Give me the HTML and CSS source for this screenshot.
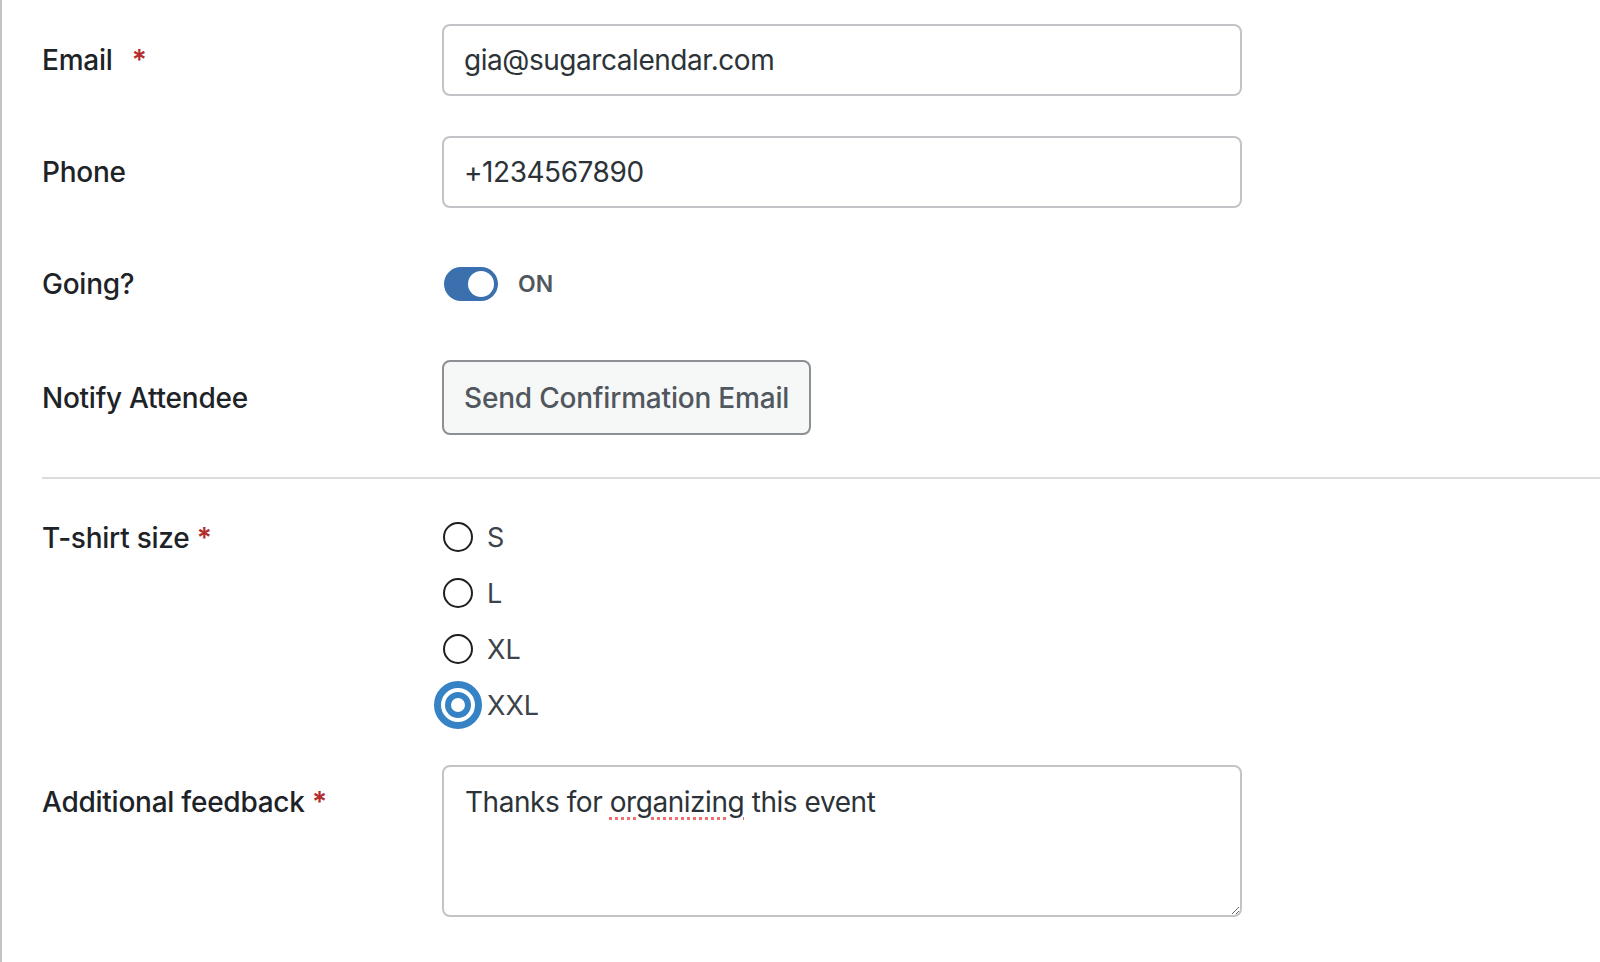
FILE: index.html
```html
<!DOCTYPE html>
<html lang="en">
<head>
<meta charset="utf-8">
<title>Attendee</title>
<link rel="stylesheet" href="styles.css">
</head>
<body>
<div class="page">
  <form class="form">
    <div class="row">
      <div class="label">Email <span class="req req-wide">*</span></div>
      <div class="field"><div class="input">gia@sugarcalendar.com</div></div>
    </div>
    <div class="row">
      <div class="label">Phone</div>
      <div class="field"><div class="input">+1234567890</div></div>
    </div>
    <div class="row">
      <div class="label">Going?</div>
      <div class="field toggle-field">
        <span class="toggle"><span class="knob"></span></span>
        <span class="toggle-text">ON</span>
      </div>
    </div>
    <div class="row row-button">
      <div class="label">Notify Attendee</div>
      <div class="field"><button type="button" class="button">Send Confirmation Email</button></div>
    </div>
    <div class="separator"></div>
    <div class="row row-top row-radios">
      <div class="label label-radios">T-shirt size <span class="req">*</span></div>
      <div class="field radios">
        <div class="radio-item">
          <svg class="radio" width="48" height="48" viewBox="0 0 48 48"><circle cx="24" cy="24" r="14" fill="#fff" stroke="#1e1e1e" stroke-width="2"/></svg>
          <span class="radio-text">S</span>
        </div>
        <div class="radio-item">
          <svg class="radio" width="48" height="48" viewBox="0 0 48 48"><circle cx="24" cy="24" r="14" fill="#fff" stroke="#1e1e1e" stroke-width="2"/></svg>
          <span class="radio-text">L</span>
        </div>
        <div class="radio-item">
          <svg class="radio" width="48" height="48" viewBox="0 0 48 48"><circle cx="24" cy="24" r="14" fill="#fff" stroke="#1e1e1e" stroke-width="2"/></svg>
          <span class="radio-text">XL</span>
        </div>
        <div class="radio-item">
          <svg class="radio" width="48" height="48" viewBox="0 0 48 48"><circle cx="24" cy="24" r="20.5" fill="none" stroke="#3582c4" stroke-width="7"/><circle cx="24" cy="24" r="10" fill="none" stroke="#3582c4" stroke-width="6"/></svg>
          <span class="radio-text">XXL</span>
        </div>
      </div>
    </div>
    <div class="row row-top row-textarea">
      <div class="label label-textarea">Additional feedback <span class="req">*</span></div>
      <div class="field"><div class="textarea">Thanks for <span class="misspelled">organizing</span> this event</div></div>
    </div>
  </form>
</div>
</body>
</html>
```

FILE: styles.css
```css
html, body {
  margin: 0;
  padding: 0;
  background: #fff;
}

body {
  font-family: Inter, "Noto Sans", "Liberation Sans", sans-serif;
  color: #1d2327;
}

.page {
  min-height: 962px;
  border-left: 2px solid #c3c4c7;
  box-sizing: border-box;
}

.form {
  padding: 24px 0 0 40px;
  display: flex;
  flex-direction: column;
}

.row {
  display: flex;
  align-items: center;
  min-height: 72px;
  margin-bottom: 40px;
}

.row-button {
  min-height: 75px;
  margin-bottom: 0;
}

.row-top {
  align-items: flex-start;
}

.label {
  width: 400px;
  flex: none;
  font-size: 28px;
  line-height: 40px;
  font-weight: 500;
  letter-spacing: -0.25px;
  color: #1d2327;
}

.label-radios {
  padding-top: 5px;
}

.label-textarea {
  padding-top: 17px;
}

.req {
  color: #b32d2e;
  font-weight: 600;
}

.req-wide {
  margin-left: 12px;
}

.field {
  flex: none;
}

.input {
  width: 800px;
  height: 72px;
  box-sizing: border-box;
  border: 2px solid #c3c4c7;
  border-radius: 8px;
  padding: 0 20px;
  display: flex;
  align-items: center;
  font-size: 28px;
  letter-spacing: -0.45px;
  color: #2c3338;
}

.toggle-field {
  display: flex;
  align-items: center;
  gap: 20px;
  padding-left: 2px;
}

.toggle {
  width: 54px;
  height: 34px;
  border-radius: 17px;
  background: #3a70ae;
  display: flex;
  align-items: center;
  justify-content: flex-end;
  padding-right: 4px;
  box-sizing: border-box;
}

.knob {
  width: 26px;
  height: 26px;
  border-radius: 50%;
  background: #fff;
}

.toggle-text {
  font-size: 23px;
  font-weight: 600;
  color: #50575e;
}

.button {
  height: 75px;
  box-sizing: border-box;
  border: 2px solid #8c8f94;
  border-radius: 8px;
  background: #f6f7f7;
  padding: 0 20px;
  font-family: inherit;
  font-size: 28px;
  font-weight: 500;
  letter-spacing: -0.2px;
  color: #50575e;
}

.separator {
  height: 2px;
  background: #dcdcde;
  margin: 42px 0 34px 0;
}

.row-radios {
  margin-bottom: 0;
}

.radios {
  margin-left: -8px;
  display: flex;
  flex-direction: column;
  gap: 8px;
}

.radio-item {
  display: flex;
  align-items: center;
  gap: 5px;
  height: 48px;
}

.radio {
  display: block;
  flex: none;
}

.radio-text {
  font-size: 27px;
  color: #3c434a;
}

.row-textarea {
  margin-top: 36px;
  margin-bottom: 0;
}

.textarea {
  width: 800px;
  height: 152px;
  box-sizing: border-box;
  border: 2px solid #c3c4c7;
  border-radius: 8px;
  padding: 15px 21px;
  font-size: 28px;
  line-height: 40px;
  letter-spacing: -0.45px;
  color: #2c3338;
  resize: both;
  overflow: auto;
}

.misspelled {
  text-decoration-line: underline;
  text-decoration-style: dotted;
  text-decoration-color: #ef6f6c;
  text-decoration-thickness: 3px;
  text-underline-offset: 5px;
}
```
